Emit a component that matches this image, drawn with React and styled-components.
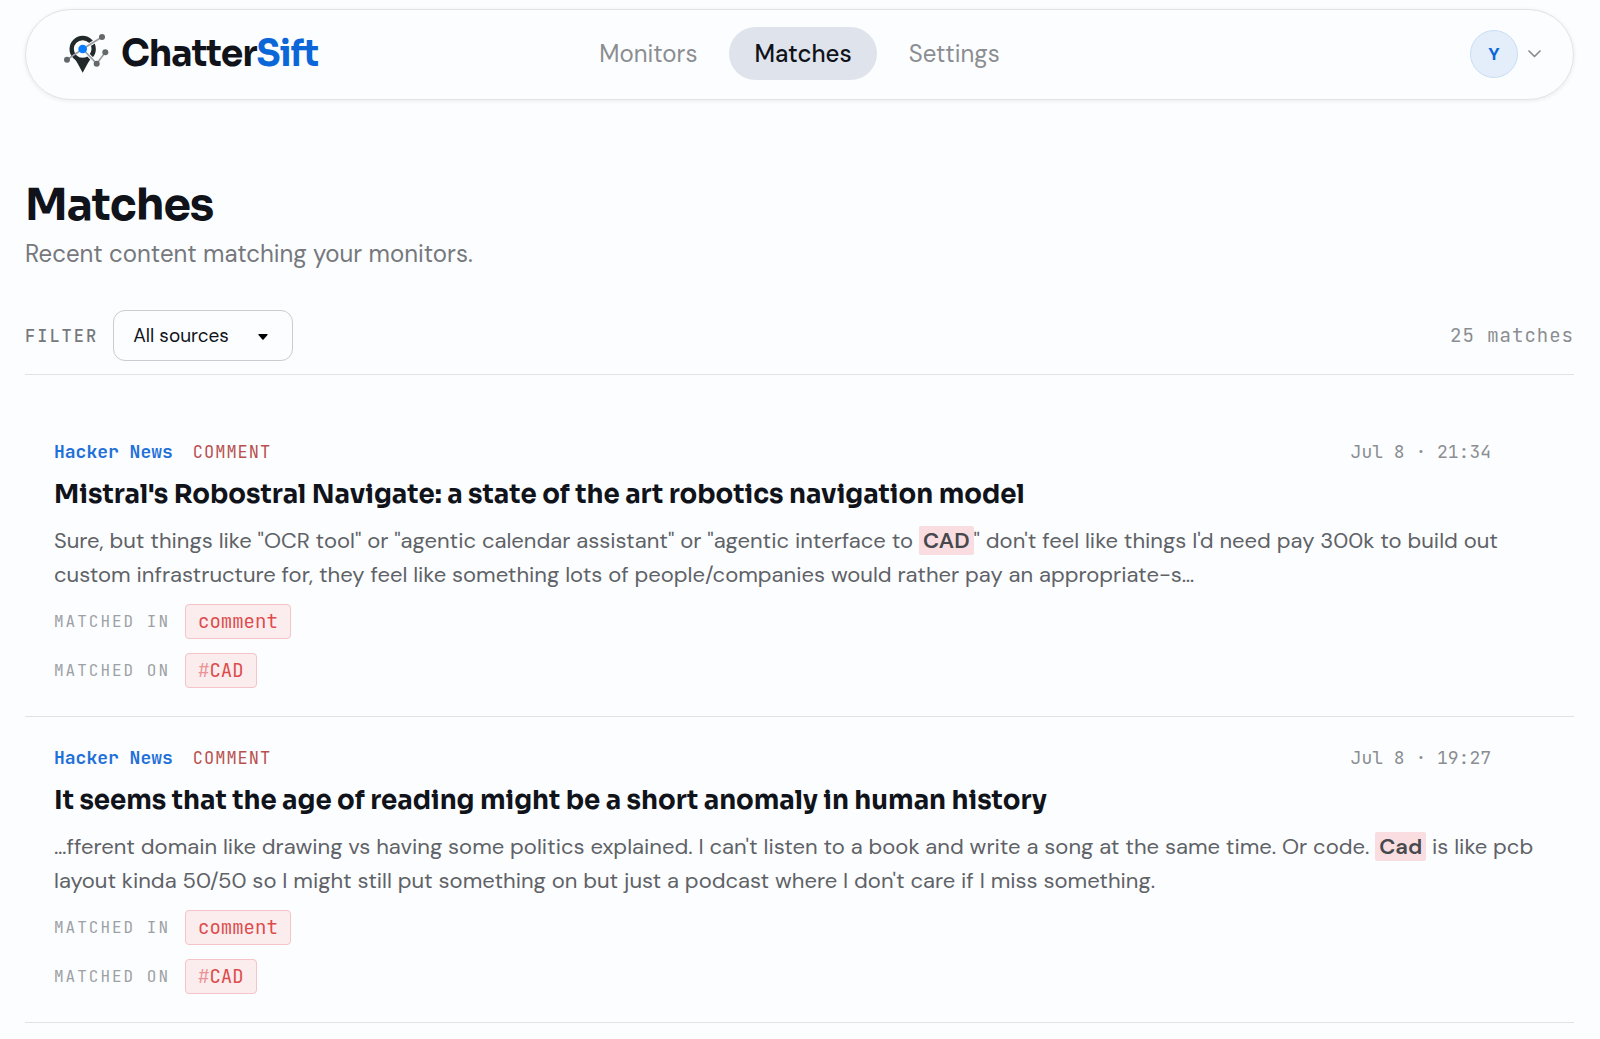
import React from "react";
import styled, { ThemeProvider, createGlobalStyle } from "styled-components";

const theme = {
  colors: {
    background: "#fbfdff",
    ink: "#10131a",
    text: "#5f6266",
    muted: "#76787c",
    gray: "#8b8d91",
    light: "#9da0a4",
    border: "#dfe2e6",
    blue: "#0b66d8",
    red: "#dc4c4c",
  },
  fonts: {
    body: `"DM Sans", Inter, sans-serif`,
    display: `Sora, Inter, sans-serif`,
    mono: `"JetBrains Mono", "DejaVu Sans Mono", monospace`,
  },
};

const links = ["Monitors", "Matches", "Settings"];

const matches = [
  {
    id: 1,
    source: "Hacker News",
    type: "comment",
    date: "Jul 8 · 21:34",
    title:
      "Mistral's Robostral Navigate: a state of the art robotics navigation model",
    before:
      'Sure, but things like "OCR tool" or "agentic calendar assistant" or "agentic interface to ',
    hit: "CAD",
    after:
      "\" don't feel like things I'd need pay 300k to build out custom infrastructure for, they feel like something lots of people/companies would rather pay an appropriate-s…",
    keyword: "CAD",
  },
  {
    id: 2,
    source: "Hacker News",
    type: "comment",
    date: "Jul 8 · 19:27",
    title:
      "It seems that the age of reading might be a short anomaly in human history",
    before:
      "…fferent domain like drawing vs having some politics explained. I can't listen to a book and write a song at the same time. Or code. ",
    hit: "Cad",
    after:
      " is like pcb layout kinda 50/50 so I might still put something on but just a podcast where I don't care if I miss something.",
    keyword: "CAD",
  },
];

const LogoMark = () => (
  <svg width="45" height="39" viewBox="42 43 135 117" aria-hidden="true">
    <path d="M71 111 L125 111 Q112 132 98 159 Q84 132 71 111Z" fill="#22292b" />
    <circle cx="98" cy="88" r="33" fill="#fbfdff" stroke="#22292b" strokeWidth="13" />
    <path
      d="M98 88 L156 52 M98 88 L140 132"
      fill="none"
      stroke="#fbfdff"
      strokeWidth="11"
    />
    <path
      d="M51 120 L98 88 L156 52 M98 88 L140 132 L166 98"
      fill="none"
      stroke="#9a9ea1"
      strokeWidth="5"
    />
    <g fill="#63686b">
      <circle cx="51" cy="120" r="9" />
      <circle cx="156" cy="52" r="9" />
      <circle cx="140" cy="132" r="9" />
      <circle cx="166" cy="98" r="9" />
    </g>
    <circle cx="98" cy="88" r="13" fill="#0a7cff" />
  </svg>
);

const Chevron = () => (
  <svg width="13" height="8" viewBox="0 0 13 8" aria-hidden="true">
    <path
      d="M1 1l5.5 5.5L12 1"
      fill="none"
      stroke="currentColor"
      strokeWidth="1.7"
      strokeLinecap="round"
      strokeLinejoin="round"
    />
  </svg>
);

const Header = () => (
  <StyledHeader>
    <StyledLogo href="#">
      <LogoMark />
      <StyledWordmark>
        Chatter<span>Sift</span>
      </StyledWordmark>
    </StyledLogo>
    <StyledNav>
      {links.map((link) => (
        <StyledNavLink key={link} href="#" $active={link === "Matches"}>
          {link}
        </StyledNavLink>
      ))}
    </StyledNav>
    <StyledAccount type="button" aria-label="Account menu">
      <StyledAvatar>Y</StyledAvatar>
      <Chevron />
    </StyledAccount>
  </StyledHeader>
);

const Toolbar = () => (
  <StyledToolbar>
    <StyledFilter>
      <StyledFilterLabel htmlFor="source">FILTER</StyledFilterLabel>
      <StyledSelectWrapper>
        <StyledSelect id="source">
          <option>All sources</option>
        </StyledSelect>
        <StyledCaret width="10" height="6" viewBox="0 0 10 6" aria-hidden="true">
          <path d="M1 0h8q1 .3.5 1L5.6 5.6q-.6.5-1.2 0L.5 1Q0 .3 1 0z" />
        </StyledCaret>
      </StyledSelectWrapper>
    </StyledFilter>
    <StyledCount>25 matches</StyledCount>
  </StyledToolbar>
);

const Match = ({ source, type, date, title, before, hit, after, keyword }) => (
  <StyledMatch>
    <StyledMeta>
      <StyledSource>{source}</StyledSource>
      <StyledType>{type}</StyledType>
      <StyledDate>{date}</StyledDate>
    </StyledMeta>
    <StyledMatchTitle>{title}</StyledMatchTitle>
    <StyledExcerpt>
      {before}
      <StyledMark>{hit}</StyledMark>
      {after}
    </StyledExcerpt>
    <StyledTags>
      <StyledTagRow>
        <StyledTagLabel>Matched in</StyledTagLabel>
        <StyledTag>{type}</StyledTag>
      </StyledTagRow>
      <StyledTagRow>
        <StyledTagLabel>Matched on</StyledTagLabel>
        <StyledTag>
          <span>#</span>
          {keyword}
        </StyledTag>
      </StyledTagRow>
    </StyledTags>
  </StyledMatch>
);

const App = () => (
  <ThemeProvider theme={theme}>
    <GlobalStyle />
    <StyledPage>
      <Header />
      <main>
        <StyledTitle>Matches</StyledTitle>
        <StyledSubtitle>Recent content matching your monitors.</StyledSubtitle>
        <Toolbar />
        <StyledList>
          {matches.map((match) => (
            <Match key={match.id} {...match} />
          ))}
        </StyledList>
      </main>
    </StyledPage>
  </ThemeProvider>
);

//===== Styles
const GlobalStyle = createGlobalStyle`
  * {
    box-sizing: border-box;
    margin: 0;
    padding: 0;
  }

  body {
    background: ${theme.colors.background};
    color: ${theme.colors.ink};
    font-family: ${theme.fonts.body};
  }

  a {
    color: inherit;
    text-decoration: none;
  }
`;

const StyledPage = styled.div`
  padding: 9px 26px 16px 25px;
`;

const StyledHeader = styled.header`
  display: grid;
  grid-template-columns: 1fr auto 1fr;
  align-items: center;
  height: 91px;
  padding: 0 32px 2px;
  border: 1px solid #dfe3e6;
  border-radius: 46px;
  box-shadow: 0 1px 4px rgba(20, 30, 40, 0.08);
`;

const StyledLogo = styled.a`
  display: flex;
  align-items: center;
  gap: 12px;
  margin-left: 6px;
`;

const StyledWordmark = styled.span`
  font-family: ${(props) => props.theme.fonts.display};
  font-size: 36px;
  font-weight: 700;
  line-height: 44px;
  letter-spacing: -1px;

  span {
    color: ${(props) => props.theme.colors.blue};
  }
`;

const StyledNav = styled.nav`
  display: flex;
  gap: 7px;
`;

const StyledNavLink = styled.a`
  padding: 0 25px;
  border-radius: 27px;
  background: ${(props) => (props.$active ? "#dfe4ec" : "transparent")};
  color: ${(props) =>
    props.$active ? props.theme.colors.ink : props.theme.colors.gray};
  font-size: 24px;
  font-weight: ${(props) => (props.$active ? 500 : 400)};
  line-height: 53px;
`;

const StyledAccount = styled.button`
  display: flex;
  align-items: center;
  justify-self: end;
  gap: 10px;
  border: none;
  background: none;
  color: ${(props) => props.theme.colors.gray};
`;

const StyledAvatar = styled.span`
  width: 48px;
  height: 48px;
  border: 1px solid #c9dff5;
  border-radius: 50%;
  background: #e3eefa;
  color: ${(props) => props.theme.colors.blue};
  font-family: ${(props) => props.theme.fonts.body};
  font-size: 18px;
  font-weight: 700;
  line-height: 46px;
`;

const StyledTitle = styled.h1`
  margin-top: 77px;
  font-family: ${(props) => props.theme.fonts.display};
  font-size: 44px;
  font-weight: 700;
  line-height: 56px;
  letter-spacing: -1px;
`;

const StyledSubtitle = styled.p`
  margin-top: 4px;
  color: ${(props) => props.theme.colors.muted};
  font-size: 24px;
  line-height: 34px;
`;

const StyledToolbar = styled.div`
  display: flex;
  align-items: center;
  justify-content: space-between;
  margin-top: 39px;
  padding-bottom: 13px;
  border-bottom: 1px solid ${(props) => props.theme.colors.border};
`;

const StyledFilter = styled.div`
  display: flex;
  align-items: center;
  gap: 15px;
`;

const StyledFilterLabel = styled.label`
  color: ${(props) => props.theme.colors.muted};
  font-family: ${(props) => props.theme.fonts.mono};
  font-size: 17px;
  font-weight: 500;
  letter-spacing: 2px;
`;

const StyledSelectWrapper = styled.div`
  position: relative;
`;

const StyledSelect = styled.select`
  display: block;
  height: 51px;
  padding: 0 63px 0 19px;
  appearance: none;
  border: 1px solid #c9ccd0;
  border-radius: 12px;
  background: transparent;
  color: ${(props) => props.theme.colors.ink};
  font-family: ${(props) => props.theme.fonts.body};
  font-size: 19px;
`;

const StyledCaret = styled.svg`
  position: absolute;
  top: 24px;
  right: 25px;
  pointer-events: none;
`;

const StyledCount = styled.p`
  color: ${(props) => props.theme.colors.gray};
  font-family: ${(props) => props.theme.fonts.mono};
  font-size: 19px;
  letter-spacing: 1px;
`;

const StyledList = styled.div`
  padding-top: 36px;
`;

const StyledMatch = styled.article`
  padding: 29px 28px 28px 29px;
  border-bottom: 1px solid ${(props) => props.theme.colors.border};
`;

const StyledMeta = styled.div`
  display: flex;
  align-items: center;
  padding-right: 55px;
  font-family: ${(props) => props.theme.fonts.mono};
  font-size: 18px;
  line-height: 24px;
`;

const StyledSource = styled.span`
  margin-right: 20px;
  color: #1f70d8;
  font-weight: 700;
`;

const StyledType = styled.span`
  color: #b8504f;
  font-size: 17px;
  letter-spacing: 1px;
  text-transform: uppercase;
`;

const StyledDate = styled.time`
  margin-left: auto;
  color: ${(props) => props.theme.colors.gray};
`;

const StyledMatchTitle = styled.h2`
  margin-top: 14px;
  font-family: ${(props) => props.theme.fonts.display};
  font-size: 26px;
  font-weight: 700;
  line-height: 34px;
`;

const StyledExcerpt = styled.p`
  margin-top: 12px;
  color: ${(props) => props.theme.colors.text};
  font-size: 22px;
  line-height: 34px;
`;

const StyledMark = styled.mark`
  padding: 0 4px;
  border-radius: 2px;
  background: #fadde0;
  color: #45484c;
  font-weight: 600;
`;

const StyledTags = styled.div`
  display: grid;
  gap: 14px;
  margin-top: 12px;
`;

const StyledTagRow = styled.div`
  display: flex;
  align-items: center;
  gap: 15px;
`;

const StyledTagLabel = styled.span`
  color: ${(props) => props.theme.colors.light};
  font-family: ${(props) => props.theme.fonts.mono};
  font-size: 16px;
  letter-spacing: 2px;
  text-transform: uppercase;
`;

const StyledTag = styled.span`
  padding: 0 12px;
  border: 1px solid #f6c3c8;
  border-radius: 4px;
  background: #fbecee;
  color: ${(props) => props.theme.colors.red};
  font-family: ${(props) => props.theme.fonts.mono};
  font-size: 19px;
  line-height: 33px;

  span {
    color: #ea9496;
  }
`;

export default App;
